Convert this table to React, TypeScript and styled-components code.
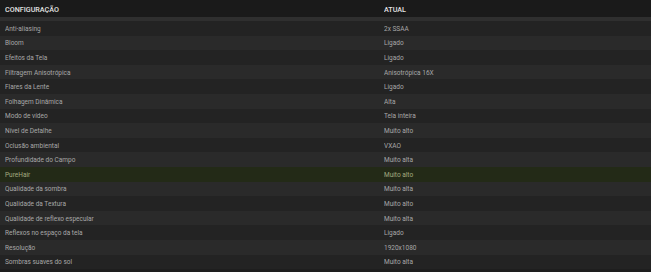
import React from "react";
import styled, { createGlobalStyle } from "styled-components";

const GlobalStyle = createGlobalStyle`
  html, body {
    margin: 0;
    padding: 0;
    background: #1e1e1e;
  }
  body {
    font-family: Roboto, "Liberation Sans", Arial, sans-serif;
    width: 651px;
    height: 272px;
    overflow: hidden;
  }
`;

interface ISetting {
  name: string;
  value: string;
  highlight?: boolean;
}

const settings: ISetting[] = [
  { name: "Anti-aliasing", value: "2x SSAA" },
  { name: "Bloom", value: "Ligado" },
  { name: "Efeitos da Tela", value: "Ligado" },
  { name: "Filtragem Anisotrópica", value: "Anisotrópica 16X" },
  { name: "Flares da Lente", value: "Ligado" },
  { name: "Folhagem Dinâmica", value: "Alta" },
  { name: "Modo de vídeo", value: "Tela inteira" },
  { name: "Nível de Detalhe", value: "Muito alto" },
  { name: "Oclusão ambiental", value: "VXAO" },
  { name: "Profundidade do Campo", value: "Muito alta" },
  { name: "PureHair", value: "Muito alto", highlight: true },
  { name: "Qualidade da sombra", value: "Muito alta" },
  { name: "Qualidade da Textura", value: "Muito alto" },
  { name: "Qualidade de reflexo especular", value: "Muito alta" },
  { name: "Reflexos no espaço da tela", value: "Ligado" },
  { name: "Resolução", value: "1920x1080" },
  { name: "Sombras suaves do sol", value: "Muito alta" },
];

const Table = styled.div`
  width: 651px;
  display: flex;
  flex-direction: column;
`;

const Header = styled.div`
  display: grid;
  grid-template-columns: 379px 1fr;
  height: 21px;
  box-sizing: border-box;
  align-items: center;
  padding: 1px 0 0 5px;
  background: #1a1a1a;
  border-bottom: 4px solid #2f2f2f;
  color: #e2e2e2;
  font-size: 7.2px;
  font-weight: 500;
  text-transform: uppercase;
`;

const Row = styled.div<{ $odd: boolean; $highlight?: boolean }>`
  display: grid;
  grid-template-columns: 379px 1fr;
  height: 14.6px;
  box-sizing: border-box;
  align-items: center;
  padding: 1px 0 0 5px;
  font-size: 6.5px;
  background: ${(p) =>
    p.$highlight ? "#232a17" : p.$odd ? "#232323" : "#2a2a2a"};
  color: ${(p) => (p.$highlight ? "#a3ab80" : "#a8a8a8")};
`;

const Cell = styled.div`
  white-space: nowrap;
  overflow: hidden;
`;

const App: React.FC = () => {
  return (
    <>
      <GlobalStyle />
      <Table>
        <Header>
          <Cell>Configuração</Cell>
          <Cell>Atual</Cell>
        </Header>
        {settings.map((s, i) => (
          <Row key={s.name} $odd={i % 2 === 0} $highlight={s.highlight}>
            <Cell>{s.name}</Cell>
            <Cell>{s.value}</Cell>
          </Row>
        ))}
      </Table>
    </>
  );
};

export default App;
